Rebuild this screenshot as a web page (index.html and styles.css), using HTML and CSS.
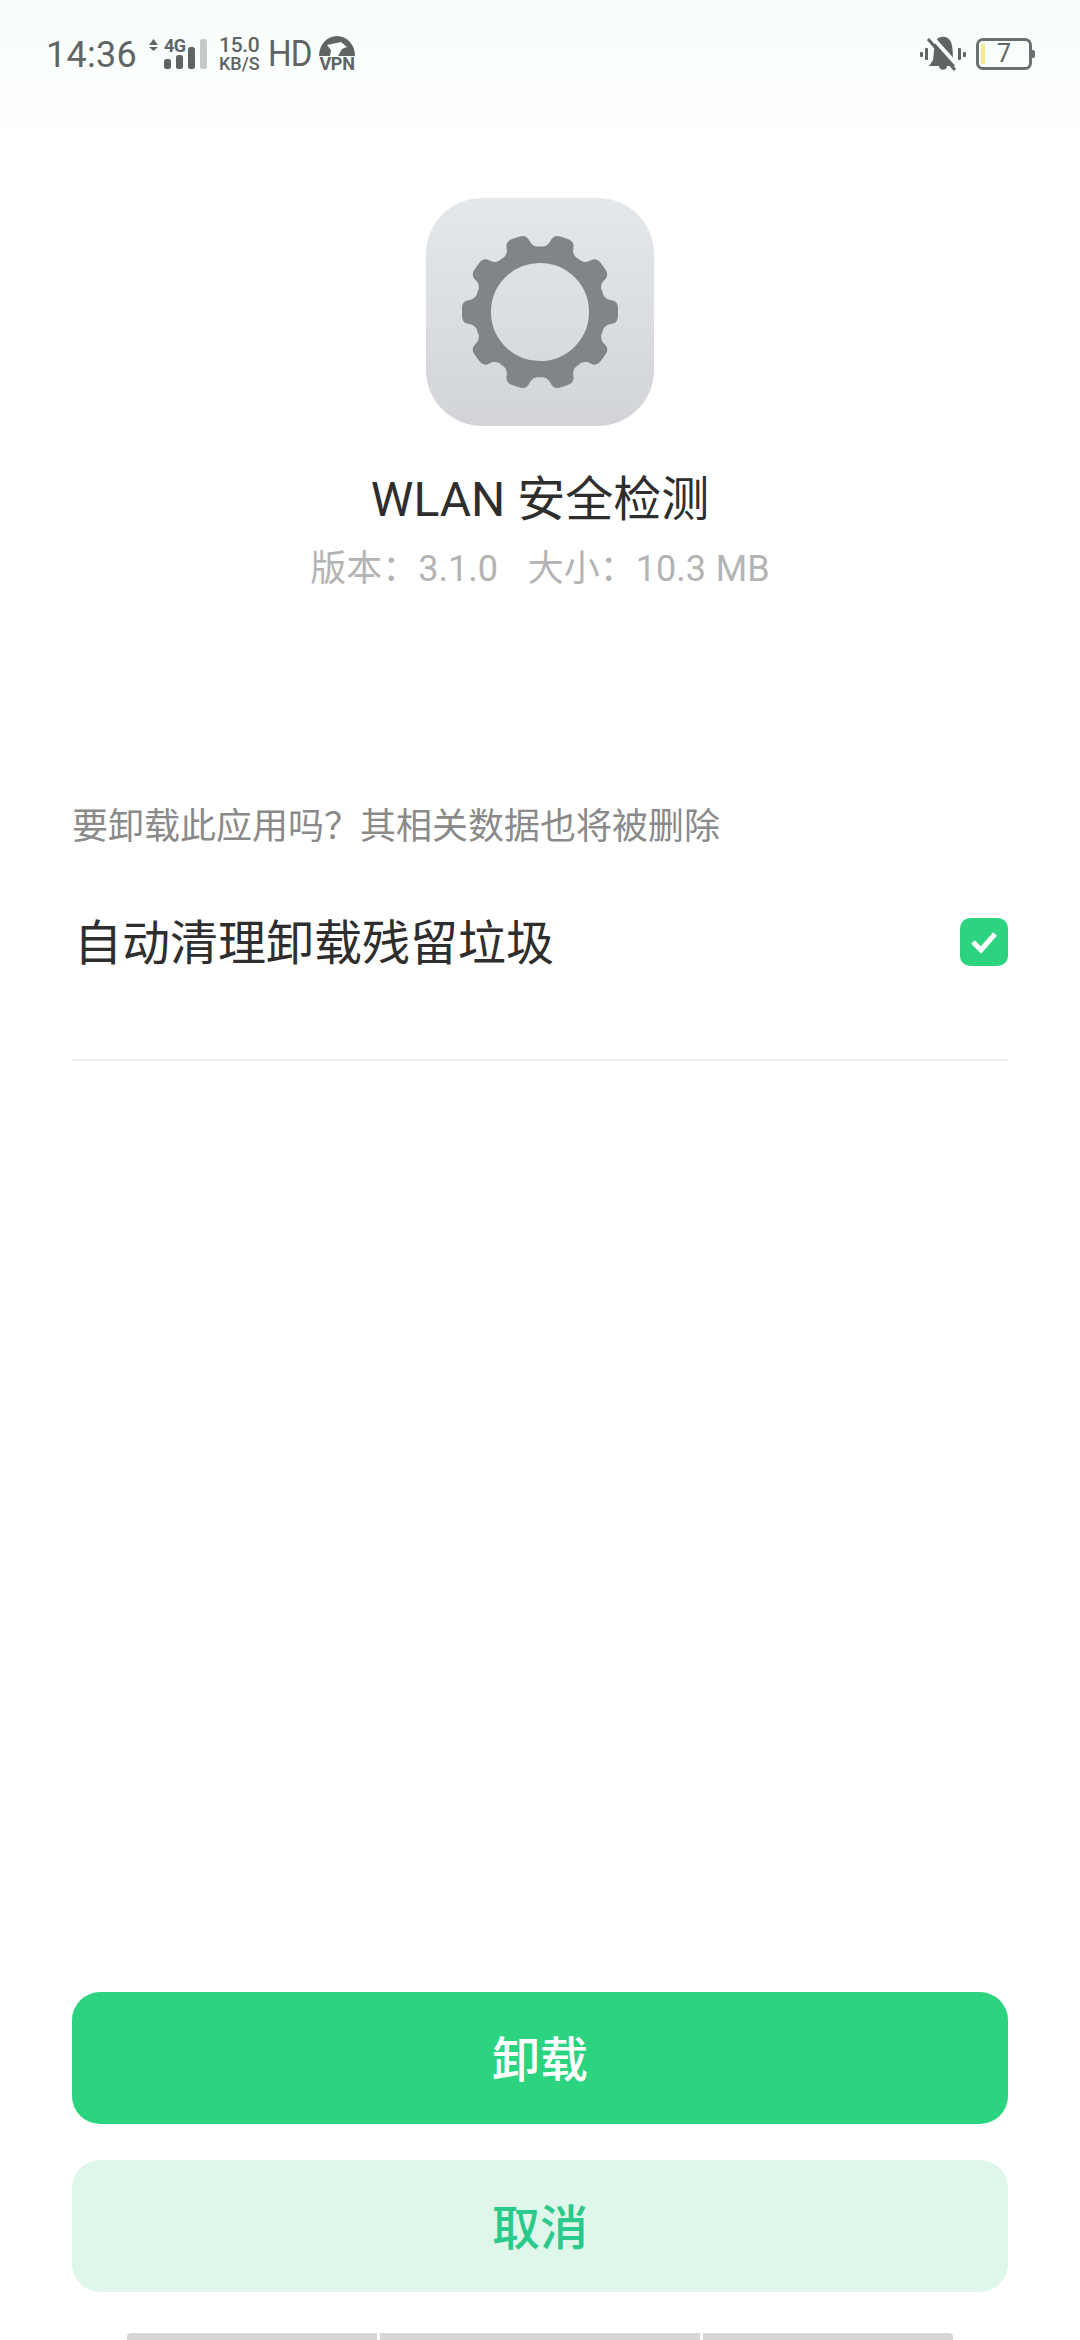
FILE: index.html
```html
<!DOCTYPE html>
<html>
	<head>
		<meta charset="UTF-8">
		<title>卸载</title>
		<link rel="stylesheet" href="styles.css">
	</head>
	<body>
		<div class="page">
			<div class="status">
				<div class="status-left">
					<span class="time">14:36</span>
					<svg class="signal" width="60" height="34" viewBox="0 0 60 34">
						<path d="M0 9 L4.500 3 L9 9 Z M0 11 L9 11 L4.500 15 Z" fill="#5f6465"/>
						<text x="15" y="16" class="signal-text">4G</text>
						<rect x="15" y="23" width="7" height="10" rx="2.500" fill="#5f6465"/>
						<rect x="27" y="19" width="7" height="14" rx="2.500" fill="#5f6465"/>
						<rect x="39" y="11" width="7" height="22" rx="2.500" fill="#5f6465"/>
						<rect x="51" y="3" width="7" height="30" rx="2.500" fill="#c6c9c9"/>
					</svg>
					<div class="speed">
						<span class="speed-num">15.0</span>
						<span class="speed-unit">KB/S</span>
					</div>
					<span class="hd">HD</span>
					<div class="vpn">
						<svg width="36" height="20" viewBox="0 0 36 20">
							<path fill-rule="evenodd" d="M0 20 A18 20 0 0 1 36 20 Z M8 9 L22 6 L28 11 L23 13 L19 20 L11 20 L12 14 Z" fill="#5f6465"/>
						</svg>
						<span class="vpn-text">VPN</span>
					</div>
				</div>
				<div class="status-right">
					<svg width="46" height="36" viewBox="0 0 46 36">
						<rect x="0" y="16" width="3" height="5" rx="1" fill="#5f6465"/>
						<rect x="43" y="16" width="3" height="5" rx="1" fill="#5f6465"/>
						<rect x="5" y="12" width="3" height="12" rx="1" fill="#5f6465"/>
						<rect x="38" y="12" width="3" height="12" rx="1" fill="#5f6465"/>
						<path d="M15 6 C18 -1 28 -1 31 6 C33 12 33 20 33 24 L37 30 L9 30 L13 24 Z M19 30 L27 30 C27 35 19 35 19 30 Z" fill="#5f6465"/>
						<path d="M12 1 L38 30" stroke="#f9fefc" stroke-width="4"/>
						<path d="M8 3 L35 34" stroke="#5f6465" stroke-width="3"/>
					</svg>
					<div class="battery">
						<span class="battery-level"></span>
						<span class="battery-num">7</span>
					</div>
				</div>
			</div>

			<div class="app">
				<div class="app-icon">
					<svg width="160" height="160" viewBox="-80 -80 160 160">
						<defs>
							<path id="tooth" d="M-21 -62 C-15 -63 -12.500 -67 -12 -71 Q-11 -78 -4 -78 L4 -78 Q11 -78 12 -71 C12.500 -67 15 -63 21 -62 L0 -50 Z"/>
						</defs>
						<g fill="#818589">
							<use href="#tooth" transform="rotate(18)"/>
							<use href="#tooth" transform="rotate(54)"/>
							<use href="#tooth" transform="rotate(90)"/>
							<use href="#tooth" transform="rotate(126)"/>
							<use href="#tooth" transform="rotate(162)"/>
							<use href="#tooth" transform="rotate(198)"/>
							<use href="#tooth" transform="rotate(234)"/>
							<use href="#tooth" transform="rotate(270)"/>
							<use href="#tooth" transform="rotate(306)"/>
							<use href="#tooth" transform="rotate(342)"/>
						</g>
						<circle r="57" fill="none" stroke="#818589" stroke-width="16"/>
					</svg>
				</div>
				<div class="app-name">WLAN 安全检测</div>
				<div class="app-info">版本：3.1.0&nbsp;&nbsp; 大小：10.3 MB</div>
			</div>

			<div class="confirm">
				<p class="prompt">要卸载此应用吗？其相关数据也将被删除</p>
				<div class="option">
					<span class="option-text">自动清理卸载残留垃圾</span>
					<span class="check">
						<svg width="32" height="26" viewBox="0 0 32 26">
							<path d="M5 13 L13 21 L27 5" fill="none" stroke="#fff" stroke-width="5"/>
						</svg>
					</span>
				</div>
			</div>

			<div class="actions">
				<a class="btn btn-primary" href="javascript:;">卸载</a>
				<a class="btn btn-cancel" href="javascript:;">取消</a>
			</div>

			<div class="navbar">
				<span class="nav-seg nav-first"></span>
				<span class="nav-seg nav-mid"></span>
				<span class="nav-seg nav-last"></span>
			</div>
		</div>
	</body>
</html>
```

FILE: styles.css
```css
*{
	margin: 0;
	padding: 0;
	box-sizing: border-box;
}
body{
	font-family: Roboto, "Noto Sans CJK SC", sans-serif;
	background: #fff;
}
.page{
	width: 1080px;
	height: 2340px;
	display: flex;
	flex-direction: column;
	overflow: hidden;
	background: linear-gradient(#f7fdfa 0, #fff 160px);
}

/* status bar */
.status{
	height: 104px;
	padding: 36px 48px 0 46px;
	display: flex;
	justify-content: space-between;
	align-items: flex-start;
	color: #5f6465;
}
.status-left{
	display: flex;
	align-items: flex-start;
}
.time{
	font-size: 36px;
	line-height: 38px;
	width: 103px;
	letter-spacing: .3px;
}
.signal{
	margin-right: 10px;
}
.signal-text{
	font-family: Roboto, sans-serif;
	font-size: 18px;
	font-weight: 700;
	letter-spacing: -.5px;
	fill: #5f6465;
}
.speed{
	width: 49px;
	display: flex;
	flex-direction: column;
	font-weight: 500;
}
.speed-num{
	font-size: 21px;
	line-height: 19px;
	letter-spacing: -.3px;
}
.speed-unit{
	font-size: 18px;
	line-height: 18px;
}
.hd{
	font-size: 36px;
	line-height: 36px;
	width: 51px;
	letter-spacing: -1px;
	transform: scaleX(.92);
	transform-origin: left center;
}
.vpn{
	width: 36px;
	display: flex;
	flex-direction: column;
	align-items: center;
}
.vpn-text{
	font-size: 18px;
	line-height: 15px;
	font-weight: 700;
	letter-spacing: -.3px;
}
.status-right{
	display: flex;
	align-items: flex-start;
	gap: 10px;
}
.battery{
	width: 56px;
	height: 32px;
	margin-top: 2px;
	border: 3px solid #6a6f70;
	border-radius: 7px;
	display: flex;
	justify-content: center;
	align-items: center;
	position: relative;
}
.battery:after{
	content: "";
	position: absolute;
	right: -6px;
	top: 9px;
	width: 3px;
	height: 8px;
	background: #6a6f70;
	border-radius: 0 2px 2px 0;
}
.battery-level{
	position: absolute;
	left: 2px;
	top: 3px;
	width: 4px;
	height: 20px;
	background: #f3ea8c;
}
.battery-num{
	font-size: 25px;
	line-height: 26px;
}

/* app info */
.app{
	display: flex;
	flex-direction: column;
	align-items: center;
	padding-top: 94px;
}
.app-icon{
	width: 228px;
	height: 228px;
	border-radius: 56px;
	background: linear-gradient(#e5e8ea, #d2d4d8);
	display: flex;
	align-items: center;
	justify-content: center;
}
.app-name{
	margin-top: 41px;
	font-size: 48px;
	line-height: 66px;
	color: #2e2e2e;
}
.app-info{
	margin-top: 11px;
	font-size: 36px;
	line-height: 50px;
	color: #b4b4b4;
	word-spacing: 1px;
}

/* uninstall options */
.confirm{
	margin: 0 72px;
	padding-top: 208px;
	border-bottom: 2px solid #ececec;
}
.prompt{
	font-size: 36px;
	line-height: 50px;
	color: #8a8a8a;
}
.option{
	height: 207px;
	padding: 59px 0 0 2px;
	display: flex;
	justify-content: space-between;
	align-items: flex-start;
}
.option-text{
	font-size: 48px;
	line-height: 66px;
	color: #2e2e2e;
}
.check{
	width: 48px;
	height: 48px;
	margin-top: 7px;
	border-radius: 10px;
	background: #2dd480;
	display: flex;
	align-items: center;
	justify-content: center;
}

/* buttons */
.actions{
	margin: auto 72px 0;
	display: flex;
	flex-direction: column;
	gap: 36px;
}
.btn{
	height: 132px;
	padding-bottom: 4px;
	border-radius: 28px;
	display: flex;
	align-items: center;
	justify-content: center;
	font-size: 48px;
	font-weight: 500;
	text-decoration: none;
}
.btn-primary{
	background: #2dd480;
	color: #fff;
}
.btn-cancel{
	background: #def7ea;
	color: #2cc98c;
}

/* bottom gesture bar */
.navbar{
	margin-top: 41px;
	padding: 0 127px;
	height: 7px;
	display: flex;
	gap: 3px;
}
.nav-seg{
	background: #d6d6d6;
}
.nav-first{
	width: 250px;
	border-radius: 4px 0 0 0;
}
.nav-mid{
	width: 320px;
}
.nav-last{
	width: 250px;
	border-radius: 0 4px 0 0;
}
```
